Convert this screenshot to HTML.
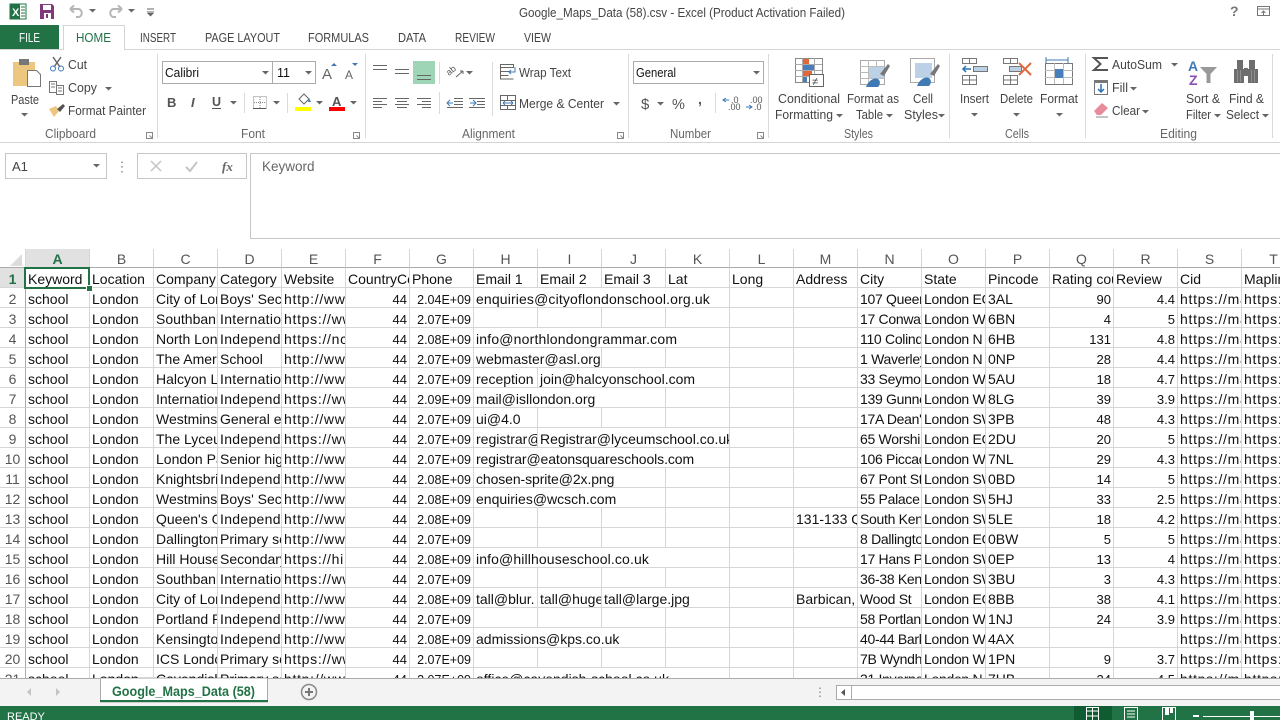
<!DOCTYPE html>
<html><head><meta charset="utf-8"><title>Excel</title>
<style>
html,body{margin:0;padding:0;width:1280px;height:720px;overflow:hidden;background:#fff;font-family:"Liberation Sans",sans-serif}
#top{position:absolute;left:0;top:0}
#g{position:absolute;left:0;top:249px;width:1280px;height:429px;overflow:hidden}
table{border-collapse:separate;border-spacing:0;table-layout:fixed;width:1306px;font:14px/16px "Liberation Sans",sans-serif;color:#111}
td,th{height:16px;padding:3px 0 0 2px;border-right:1px solid #d6d6d6;border-bottom:1px solid #d6d6d6;overflow:hidden;white-space:nowrap;text-align:left;font-weight:normal;box-sizing:content-box;vertical-align:top}
tr.h th{text-align:center;color:#555;padding:2px 0 0;background:#fff;border-bottom:1px solid #ababab;border-right:1px solid #d6d6d6;height:16px}
tr.h th.s{background:#e1e1e1;color:#217346;font-weight:bold;border-bottom:1px solid #217346}
tr.h th.z{padding:0;height:18px}
td.n{text-align:center;padding:3px 0 0;color:#555;background:#fff;border-right:1px solid #ababab}
td.n.s{background:#e1e1e1;color:#217346;font-weight:bold}
td.r{text-align:right;padding:4px 2px 0 0;font-size:13px;line-height:15px;height:15px}
td.p{text-align:right;padding:5px 2px 0 0;font-size:12.5px;line-height:14px;height:14px}
td.u{letter-spacing:.7px}
td.d{letter-spacing:.3px}
td.k{letter-spacing:-.3px}
#sel{position:absolute;left:24px;top:18px;width:62px;height:18px;border:2px solid #217346}
#hnd{position:absolute;left:86px;top:36px;width:5px;height:5px;background:#217346;border:1px solid #fff}
</style></head><body>
<svg id="top" width="1280" height="720" viewBox="0 0 1280 720" font-family="Liberation Sans, sans-serif" font-size="12.5" fill="#444">
<defs><path id="c" d="M0 0h7l-3.5 3.5z" fill="#666"/><path id="l" d="M0 0h6v6h-6zM3 3l3 3M6 3v3h-3" fill="none" stroke="#888"/></defs>
<!-- title bar -->
<rect x="10" y="4" width="16" height="15" fill="#fff" stroke="#217346"/><rect x="10" y="4" width="10" height="15" fill="#217346"/>
<text x="12" y="16" font-size="11" font-weight="bold" fill="#fff">X</text>
<path d="M21 7h4M21 10h4M21 13h4M21 16h4" stroke="#217346"/>
<path d="M40 4h12l2 2v13h-14z" fill="#80397b"/><rect x="43" y="5" width="8" height="5" fill="#fff"/><rect x="44" y="13" width="7" height="6" fill="#fff"/><rect x="46" y="14" width="2" height="4" fill="#80397b"/>
<path d="M70 9h8c5 0 5 8 0 8h-2M70 9l4-3.500M70 9l4 3.500" fill="none" stroke="#b5b5b5" stroke-width="2"/><use href="#c" x="89" y="9"/>
<path d="M122 9h-8c-5 0-5 8 0 8h2M122 9l-4-3.500M122 9l-4 3.500" fill="none" stroke="#b5b5b5" stroke-width="2"/><use href="#c" x="128" y="9"/>
<path d="M147 9h7M147 12h7" stroke="#666"/><use href="#c" x="147" y="13"/>
<text x="519" y="17" textLength="326" lengthAdjust="spacingAndGlyphs" fill="#444">Google_Maps_Data (58).csv - Excel (Product Activation Failed)</text>
<text x="1230" y="16" font-size="14" font-weight="bold" fill="#777">?</text>
<rect x="1257.500" y="6.500" width="12" height="9" fill="none" stroke="#777"/><path d="M1258 9h12M1263.500 15v-4M1261.500 13l2-2 2 2" stroke="#777" fill="none"/>
<!-- tabs -->
<rect x="0" y="25" width="59" height="25" fill="#217346"/>
<text x="19" y="42" fill="#fff" font-size="12.500" textLength="21" lengthAdjust="spacingAndGlyphs">FILE</text>
<path d="M0 49.500H63.500V25.500H124.500V49.500H1280" fill="none" stroke="#d4d4d4"/>
<text x="76" y="42" fill="#217346" textLength="35" lengthAdjust="spacingAndGlyphs">HOME</text>
<text x="140" y="42" textLength="36" lengthAdjust="spacingAndGlyphs">INSERT</text>
<text x="205" y="42" textLength="75" lengthAdjust="spacingAndGlyphs">PAGE LAYOUT</text>
<text x="308" y="42" textLength="61" lengthAdjust="spacingAndGlyphs">FORMULAS</text>
<text x="398" y="42" textLength="28" lengthAdjust="spacingAndGlyphs">DATA</text>
<text x="455" y="42" textLength="40" lengthAdjust="spacingAndGlyphs">REVIEW</text>
<text x="524" y="42" textLength="27" lengthAdjust="spacingAndGlyphs">VIEW</text>
<path d="M0 142.500H1280" stroke="#d4d4d4"/>
<path d="M157.500 54v84M365.500 54v84M628.500 54v84M768.500 54v84M949.500 54v84M1085.500 54v84M1272.500 54v84M439.500 62v22M439.500 92v22M492.500 62v54M715.500 93v20M244.500 93v20M287.500 93v20" stroke="#dadada"/>
<!-- clipboard -->
<rect x="13" y="62" width="22" height="24" fill="#edc67f"/><rect x="19" y="59" width="10" height="6" fill="#777"/>
<path d="M27.500 70.500h9l4 4v12h-13z" fill="#fff" stroke="#777"/>
<text x="11" y="104" textLength="28" lengthAdjust="spacingAndGlyphs">Paste</text><use href="#c" x="21" y="113"/>
<path d="M53 57l7 10M61 57l-7 10" stroke="#666" stroke-width="1.500"/><circle cx="53" cy="68.500" r="2.500" fill="none" stroke="#3f7ab5"/><circle cx="61" cy="68.500" r="2.500" fill="none" stroke="#3f7ab5"/>
<text x="68" y="69" textLength="19" lengthAdjust="spacingAndGlyphs">Cut</text>
<path d="M49.500 81.500h7v11h-7zM56.500 85.500h7v9h-7zM51 84h4M51 87h4M58 88h4M58 91h4" fill="#fff" stroke="#777"/>
<text x="68" y="92" textLength="29" lengthAdjust="spacingAndGlyphs">Copy</text><use href="#c" x="105" y="87"/>
<path d="M49 109l7-3 3 5-5 6z" fill="#edc67f"/><path d="M57 109l6-5 2 2-5 6z" fill="#555"/>
<text x="68" y="115" textLength="78" lengthAdjust="spacingAndGlyphs">Format Painter</text>
<text x="45" y="138" textLength="51" lengthAdjust="spacingAndGlyphs" fill="#666">Clipboard</text>
<use href="#l" x="146.500" y="132.500"/>
<!-- font -->
<rect x="162.500" y="61.500" width="110" height="22" fill="#fff" stroke="#ababab"/><rect x="272.500" y="61.500" width="43" height="22" fill="#fff" stroke="#ababab"/>
<text x="165" y="77" fill="#111" textLength="34" lengthAdjust="spacingAndGlyphs">Calibri</text><text x="277" y="77" fill="#111">11</text>
<use href="#c" x="262" y="71"/><use href="#c" x="305" y="71"/>
<text x="322" y="79" font-size="15" fill="#666">A</text><path d="M331 66l3-3 3 3z" fill="#3f7ab5"/>
<text x="345" y="79" font-size="12" fill="#666">A</text><path d="M352 63l3 3 3-3z" fill="#3f7ab5"/>
<text x="167" y="107" font-weight="bold" fill="#555" font-size="13">B</text>
<text x="191" y="107" font-style="italic" font-weight="bold" fill="#555" font-size="13">I</text>
<text x="212" y="106" font-weight="bold" fill="#555" font-size="12.500">U</text><path d="M212 108.500h9" stroke="#555"/><use href="#c" x="230" y="101"/>
<path d="M253.500 96.500h13v12h-13zM260 97v11M254 102.500h12" fill="none" stroke="#888" stroke-dasharray="1 1"/><path d="M253 108.500h13" stroke="#555"/><use href="#c" x="273" y="101"/>
<path d="M299 99l5-5 5 5-5 5z" fill="#fff" stroke="#666"/><path d="M309 98l2 4h-3z" fill="#3f7ab5"/><rect x="295" y="107" width="16" height="4" fill="#ffff00"/><use href="#c" x="316" y="101"/>
<text x="332" y="106" font-size="13" font-weight="bold" fill="#555">A</text><rect x="329" y="107" width="16" height="4" fill="#f00"/><use href="#c" x="350" y="101"/>
<text x="241" y="138" textLength="24" lengthAdjust="spacingAndGlyphs" fill="#666">Font</text>
<use href="#l" x="353.500" y="132.500"/>
<!-- alignment -->
<rect x="413" y="61" width="22" height="23" fill="#9fd5b7"/>
<path d="M373 65.500h14M373 69.500h14M395 69.500h14M395 73.500h14M417 75.500h14M417 79.500h14" stroke="#666" fill="none"/>
<text x="0" y="0" font-size="9" fill="#555" transform="translate(449 76) rotate(-40)">ab</text>
<path d="M456 77l7-6M463 71h-3M463 71v3" fill="none" stroke="#666"/><use href="#c" x="466" y="71"/>
<path d="M500.500 64.500h13v3h-13zM500.500 71.500h10M500.500 75.500h8M500.500 64v15h13" fill="none" stroke="#666"/><path d="M515 67v5h-6M511 70l-2 2 2 2" fill="none" stroke="#3f7ab5"/>
<text x="519" y="77" textLength="52" lengthAdjust="spacingAndGlyphs">Wrap Text</text>
<path d="M373 98.500h14M373 101.500h9M373 104.500h14M373 107.500h9M395 98.500h14M397 101.500h10M395 104.500h14M397 107.500h10M417 98.500h14M422 101.500h9M417 104.500h14M422 107.500h9" stroke="#666"/>
<path d="M454 98.500h9M454 101.500h9M454 104.500h9M447 107.500h16M469 98.500h16M477 101.500h8M477 104.500h8M469 107.500h16" stroke="#666"/><path d="M453 103h-6M450 100l-3 3 3 3" fill="none" stroke="#3f7ab5"/><path d="M470 103h6M473 100l3 3-3 3" fill="none" stroke="#3f7ab5"/>
<rect x="500.500" y="95.500" width="15" height="14" fill="none" stroke="#666"/><path d="M500 100.500h16M500 105.500h16M507.500 95v5M507.500 106v4" stroke="#666"/><path d="M503 103h10M503 103l2-2M503 103l2 2M513 103l-2-2M513 103l-2 2" stroke="#3f7ab5" fill="none"/>
<text x="519" y="108" textLength="85" lengthAdjust="spacingAndGlyphs">Merge &amp; Center</text><use href="#c" x="613" y="102"/>
<text x="462" y="138" textLength="53" lengthAdjust="spacingAndGlyphs" fill="#666">Alignment</text>
<use href="#l" x="617.500" y="132.500"/>
<!-- number -->
<rect x="633.500" y="61.500" width="130" height="22" fill="#fff" stroke="#ababab"/>
<text x="636" y="77" fill="#111" textLength="40" lengthAdjust="spacingAndGlyphs">General</text><use href="#c" x="753" y="71"/>
<text x="641" y="109" font-size="15" fill="#555">$</text><use href="#c" x="657" y="102"/>
<text x="672" y="109" font-size="14.500" fill="#555">%</text><text x="698" y="104" font-size="14" font-weight="bold" fill="#555">,</text>
<text x="731" y="103" font-size="9" fill="#555">.0</text><text x="728" y="110" font-size="9" fill="#555">.00</text><path d="M729 100h-6M726 98l-3 2 3 2" stroke="#3f7ab5" fill="none"/>
<text x="750" y="103" font-size="9" fill="#555">.00</text><text x="754" y="110" font-size="9" fill="#555">.0</text><path d="M746 107h6M749 105l3 2-3 2" stroke="#3f7ab5" fill="none"/>
<text x="670" y="138" textLength="41" lengthAdjust="spacingAndGlyphs" fill="#666">Number</text>
<use href="#l" x="757.500" y="132.500"/>
<!-- styles -->
<rect x="795.500" y="58.500" width="27" height="24" fill="#fff" stroke="#888"/><path d="M795 64.500h27M795 70.500h27M795 76.500h27M802.500 58v24M814.500 58v24" stroke="#aaa"/>
<rect x="803" y="59" width="6" height="5" fill="#e2683c"/><rect x="803" y="65" width="11" height="5" fill="#4a7ebb"/><rect x="803" y="71" width="9" height="5" fill="#e2683c"/><rect x="803" y="77" width="4" height="5" fill="#4a7ebb"/>
<rect x="809.500" y="74.500" width="14" height="12" fill="#fff" stroke="#666"/><text x="812" y="85" font-size="11" fill="#444">≠</text>
<text x="778" y="103" textLength="62" lengthAdjust="spacingAndGlyphs">Conditional</text>
<text x="775" y="119" textLength="58" lengthAdjust="spacingAndGlyphs">Formatting</text><use href="#c" x="836" y="114"/>
<rect x="860.500" y="60.500" width="24" height="24" fill="#fff" stroke="#aaa"/><path d="M860 66.500h25M860 72.500h25M860 78.500h25M868.500 60v25M876.500 60v25" stroke="#bbb"/><rect x="869" y="67" width="15" height="11" fill="#bcd0e6"/>
<path d="M880 74l8-10 2 2-6 10z" fill="#777"/><path d="M866 87c2-6 8-10 12-8 3 2 2 6 0 8z" fill="#3f7ab5"/>
<text x="847" y="103" textLength="52" lengthAdjust="spacingAndGlyphs">Format as</text>
<text x="856" y="119" textLength="27" lengthAdjust="spacingAndGlyphs">Table</text><use href="#c" x="886" y="114"/>
<rect x="910.500" y="58.500" width="24" height="24" fill="#fff" stroke="#aaa"/><rect x="915" y="63" width="17" height="15" fill="#bcd0e6"/>
<path d="M930 74l8-10 2 2-6 10z" fill="#777"/><path d="M917 86c2-6 8-10 12-8 3 2 2 6 0 8z" fill="#3f7ab5"/>
<text x="913" y="103" textLength="20" lengthAdjust="spacingAndGlyphs">Cell</text>
<text x="904" y="119" textLength="34" lengthAdjust="spacingAndGlyphs">Styles</text><use href="#c" x="938" y="114"/>
<text x="844" y="138" textLength="29" lengthAdjust="spacingAndGlyphs" fill="#666">Styles</text>
<!-- cells -->
<path d="M962.500 58.500h14v5h-14zM969.500 58v5M973.500 66.500h14v5h-14zM980.500 66v5M962.500 75.500h14v9h-14zM962.500 80h14M969.500 75v9" fill="none" stroke="#777"/><rect x="974" y="67" width="13" height="4" fill="#bcd0e6"/><path d="M971 69h-8M966 66l-3 3 3 3" fill="none" stroke="#2a6fb5" stroke-width="1.500"/>
<text x="960" y="103" textLength="29" lengthAdjust="spacingAndGlyphs">Insert</text><use href="#c" x="971" y="113"/>
<path d="M1003.500 58.500h14v5h-14zM1010.500 58v5M1003.500 75.500h14v9h-14zM1003.500 80h14M1010.500 75v9M1009.500 66.500h12v5h-12z" fill="none" stroke="#777"/><rect x="1010" y="67" width="11" height="4" fill="#bcd0e6"/><path d="M1019 63l12 12M1031 63l-12 12" stroke="#e2683c" stroke-width="2"/>
<text x="1000" y="103" textLength="33" lengthAdjust="spacingAndGlyphs">Delete</text><use href="#c" x="1013" y="113"/>
<path d="M1046 60h22M1046 57v6M1068 57v6" stroke="#3f7ab5" fill="none"/>
<rect x="1045.500" y="63.500" width="27" height="21" fill="#fff" stroke="#777"/><path d="M1045 70.500h28M1045 77.500h28M1054.500 63v21M1063.500 63v21" stroke="#bbb"/><rect x="1055" y="69" width="8" height="9" fill="#4a7ebb"/>
<text x="1040" y="103" textLength="38" lengthAdjust="spacingAndGlyphs">Format</text><use href="#c" x="1056" y="113"/>
<text x="1005" y="138" textLength="24" lengthAdjust="spacingAndGlyphs" fill="#666">Cells</text>
<!-- editing -->
<path d="M1108 58h-14l6.500 6-6.500 6h14" fill="none" stroke="#555" stroke-width="2"/>
<text x="1112" y="69" textLength="50" lengthAdjust="spacingAndGlyphs">AutoSum</text><use href="#c" x="1171" y="63"/>
<rect x="1094.500" y="80.500" width="13" height="14" fill="#fff" stroke="#777"/><rect x="1094" y="80" width="14" height="3" fill="#777"/><path d="M1101 84v8M1098 89l3 3 3-3" fill="none" stroke="#2a6fb5" stroke-width="1.500"/>
<text x="1112" y="92" textLength="16" lengthAdjust="spacingAndGlyphs">Fill</text><use href="#c" x="1130" y="87"/>
<path d="M1094 111l8-8 6 5-7 7h-4z" fill="#e88b9b"/><path d="M1096 117h12" stroke="#888"/>
<text x="1112" y="115" textLength="28" lengthAdjust="spacingAndGlyphs">Clear</text><use href="#c" x="1142" y="110"/>
<text x="1188" y="71" font-size="14" font-weight="bold" fill="#3f7ab5">A</text><text x="1189" y="85" font-size="14" font-weight="bold" fill="#8a4fb5">Z</text>
<path d="M1200 67h17l-6.500 7v9h-4v-9z" fill="#999"/>
<text x="1186" y="103" textLength="34" lengthAdjust="spacingAndGlyphs">Sort &amp;</text>
<text x="1186" y="119" textLength="25" lengthAdjust="spacingAndGlyphs">Filter</text><use href="#c" x="1214" y="114"/>
<rect x="1237" y="60" width="6" height="9" fill="#6e6e6e"/><rect x="1249" y="60" width="6" height="9" fill="#6e6e6e"/>
<rect x="1234" y="69" width="10" height="14" fill="#6e6e6e"/><rect x="1248" y="69" width="10" height="14" fill="#6e6e6e"/><rect x="1244" y="68" width="4" height="8" fill="#6e6e6e"/>
<path d="M1237.500 70v12M1240.500 70v12M1251.500 70v12M1254.500 70v12" stroke="#909090"/>
<text x="1229" y="103" textLength="35" lengthAdjust="spacingAndGlyphs">Find &amp;</text>
<text x="1226" y="119" textLength="33" lengthAdjust="spacingAndGlyphs">Select</text><use href="#c" x="1262" y="114"/>
<text x="1160" y="138" textLength="37" lengthAdjust="spacingAndGlyphs" fill="#666">Editing</text>
<!-- formula bar -->
<rect x="5.500" y="153.500" width="101" height="25" fill="#fff" stroke="#c6c6c6"/>
<text x="12" y="171" font-size="13" fill="#444">A1</text><use href="#c" x="93" y="164"/>
<path d="M122 161.500v1.500M122 166v1.500M122 171v1.500" stroke="#aaa" stroke-width="2"/>
<rect x="137.500" y="153.500" width="109" height="25" fill="#fff" stroke="#c6c6c6"/>
<path d="M151 161l10 10M161 161l-10 10" stroke="#c4c4c4" stroke-width="1.500"/>
<path d="M186 167l4 4 7-9" stroke="#c4c4c4" stroke-width="2" fill="none"/>
<text x="222" y="171" font-family="Liberation Serif, serif" font-style="italic" font-weight="bold" font-size="13" fill="#666">fx</text>
<path d="M1280 153.500H250.500V238.500H1280" fill="#fff" stroke="#c6c6c6"/>
<text x="262" y="171" font-size="13.500" fill="#666">Keyword</text>
<!-- tab bar -->
<rect x="0" y="678" width="1280" height="28" fill="#f3f3f3"/>
<path d="M0 678.500H1280" stroke="#ababab"/>
<path d="M31 688v8l-4-4zM56 688v8l4-4z" fill="#c4c4c4"/>
<rect x="100.500" y="678" width="167" height="24" fill="#fff" stroke="#ababab"/>
<rect x="100" y="700" width="168" height="2" fill="#217346"/>
<text x="112" y="696" font-size="13.500" font-weight="bold" fill="#217346" textLength="143" lengthAdjust="spacingAndGlyphs">Google_Maps_Data (58)</text>
<circle cx="309" cy="692" r="7.500" fill="none" stroke="#888" stroke-width="1.500"/><path d="M309 688v8M305 692h8" stroke="#777" stroke-width="2"/>
<path d="M820 687.500v1.500M820 691.500v1.500M820 695.500v1.500" stroke="#aaa" stroke-width="2"/>
<rect x="836.500" y="685.500" width="450" height="14" fill="#fff" stroke="#ababab"/>
<path d="M851.500 685v15" stroke="#ababab"/><path d="M845 689v7l-4-3.500z" fill="#555"/>
<!-- status -->
<rect x="0" y="706" width="1280" height="14" fill="#217346"/>
<text x="7" y="720" font-size="11" fill="#fff">READY</text>
<rect x="1074" y="706" width="38" height="14" fill="#0f5c33"/>
<path d="M1086.500 711h12M1086.500 716h12M1086.500 708v12M1092.500 708v12M1098.500 708v12M1086 707.500h13" stroke="#fff" fill="none"/>
<path d="M1124.500 720v-12.500h13V720M1127 711h8M1127 714h8M1127 717h8" stroke="#fff" fill="none"/>
<path d="M1162.500 720v-12.500h13V720" stroke="#fff" fill="none"/><rect x="1165" y="708" width="4" height="7" fill="#fff"/><rect x="1170" y="708" width="3" height="5" fill="#fff"/>
<rect x="1193" y="715" width="6" height="2" fill="#fff"/><rect x="1203" y="716" width="77" height="1" fill="#fff"/><rect x="1250" y="711" width="4" height="9" fill="#fff"/>
</svg>
<div id="g"><table>
<colgroup><col style="width:26px"><col span="20" style="width:64px"></colgroup>
<tr class="h"><th class="z"><svg width="25" height="18" style="display:block"><path d="M10 17L22 5V17z" fill="#dcdcdc"/></svg></th><th class="s">A</th><th>B</th><th>C</th><th>D</th><th>E</th><th>F</th><th>G</th><th>H</th><th>I</th><th>J</th><th>K</th><th>L</th><th>M</th><th>N</th><th>O</th><th>P</th><th>Q</th><th>R</th><th>S</th><th>T</th></tr>
<tr><td class="n s">1</td><td>Keyword</td><td>Location</td><td>Company</td><td>Category</td><td>Website</td><td>CountryCode</td><td>Phone</td><td>Email 1</td><td>Email 2</td><td>Email 3</td><td>Lat</td><td>Long</td><td>Address</td><td>City</td><td>State</td><td>Pincode</td><td>Rating count</td><td>Review</td><td>Cid</td><td>Maplink</td></tr>
<tr><td class="n">2</td><td>school</td><td>London</td><td>City of London</td><td>Boys' Secondary</td><td class="u">http://www</td><td class="r">44</td><td class="p">2.04E+09</td><td colspan="4" style="letter-spacing:.14px">enquiries@cityoflondonschool.org.uk</td><td></td><td></td><td class="k">107 Queen</td><td class="k">London EC</td><td>3AL</td><td class="r">90</td><td class="r">4.4</td><td class="u">https://maps</td><td class="u">https://maps</td></tr>
<tr><td class="n">3</td><td>school</td><td>London</td><td>Southbank</td><td class="d">International</td><td class="u">https://www</td><td class="r">44</td><td class="p">2.07E+09</td><td></td><td></td><td></td><td></td><td></td><td></td><td class="k">17 Conway</td><td class="k">London W</td><td>6BN</td><td class="r">4</td><td class="r">5</td><td class="u">https://maps</td><td class="u">https://maps</td></tr>
<tr><td class="n">4</td><td>school</td><td>London</td><td>North London</td><td class="d">Independent</td><td class="u">https://nc</td><td class="r">44</td><td class="p">2.08E+09</td><td colspan="4" style="letter-spacing:.18px">info@northlondongrammar.com</td><td></td><td></td><td class="k">110 Colindale</td><td class="k">London N</td><td>6HB</td><td class="r">131</td><td class="r">4.8</td><td class="u">https://maps</td><td class="u">https://maps</td></tr>
<tr><td class="n">5</td><td>school</td><td>London</td><td>The American</td><td>School</td><td class="u">http://www</td><td class="r">44</td><td class="p">2.07E+09</td><td colspan="2">webmaster@asl.org</td><td></td><td></td><td></td><td></td><td class="k">1 Waverley</td><td class="k">London N</td><td>0NP</td><td class="r">28</td><td class="r">4.4</td><td class="u">https://maps</td><td class="u">https://maps</td></tr>
<tr><td class="n">6</td><td>school</td><td>London</td><td>Halcyon London</td><td class="d">International</td><td class="u">http://www</td><td class="r">44</td><td class="p">2.07E+09</td><td>reception</td><td colspan="3">join@halcyonschool.com</td><td></td><td></td><td class="k">33 Seymour</td><td class="k">London W</td><td>5AU</td><td class="r">18</td><td class="r">4.7</td><td class="u">https://maps</td><td class="u">https://maps</td></tr>
<tr><td class="n">7</td><td>school</td><td>London</td><td>International</td><td class="d">Independent</td><td class="u">https://www</td><td class="r">44</td><td class="p">2.09E+09</td><td colspan="3">mail@isllondon.org</td><td></td><td></td><td></td><td class="k">139 Gunnersbury</td><td class="k">London W</td><td>8LG</td><td class="r">39</td><td class="r">3.9</td><td class="u">https://maps</td><td class="u">https://maps</td></tr>
<tr><td class="n">8</td><td>school</td><td>London</td><td>Westminster</td><td>General education</td><td class="u">http://www</td><td class="r">44</td><td class="p">2.07E+09</td><td>ui@4.0</td><td></td><td></td><td></td><td></td><td></td><td class="k">17A Dean's</td><td class="k">London SW</td><td>3PB</td><td class="r">48</td><td class="r">4.3</td><td class="u">https://maps</td><td class="u">https://maps</td></tr>
<tr><td class="n">9</td><td>school</td><td>London</td><td>The Lyceum</td><td class="d">Independent</td><td class="u">https://www</td><td class="r">44</td><td class="p">2.07E+09</td><td>registrar@lyceum</td><td colspan="3">Registrar@lyceumschool.co.uk</td><td></td><td></td><td class="k">65 Worship</td><td class="k">London EC</td><td>2DU</td><td class="r">20</td><td class="r">5</td><td class="u">https://maps</td><td class="u">https://maps</td></tr>
<tr><td class="n">10</td><td>school</td><td>London</td><td>London Park</td><td>Senior high</td><td class="u">http://www</td><td class="r">44</td><td class="p">2.07E+09</td><td colspan="4" style="letter-spacing:-.1px">registrar@eatonsquareschools.com</td><td></td><td></td><td class="k">106 Piccadilly</td><td class="k">London W</td><td>7NL</td><td class="r">29</td><td class="r">4.3</td><td class="u">https://maps</td><td class="u">https://maps</td></tr>
<tr><td class="n">11</td><td>school</td><td>London</td><td>Knightsbridge</td><td class="d">Independent</td><td class="u">http://www</td><td class="r">44</td><td class="p">2.08E+09</td><td colspan="3" style="letter-spacing:-.1px">chosen-sprite@2x.png</td><td></td><td></td><td></td><td class="k">67 Pont St</td><td class="k">London SW</td><td>0BD</td><td class="r">14</td><td class="r">5</td><td class="u">https://maps</td><td class="u">https://maps</td></tr>
<tr><td class="n">12</td><td>school</td><td>London</td><td>Westminster</td><td>Boys' Secondary</td><td class="u">http://www</td><td class="r">44</td><td class="p">2.08E+09</td><td colspan="3">enquiries@wcsch.com</td><td></td><td></td><td></td><td class="k">55 Palace</td><td class="k">London SW</td><td>5HJ</td><td class="r">33</td><td class="r">2.5</td><td class="u">https://maps</td><td class="u">https://maps</td></tr>
<tr><td class="n">13</td><td>school</td><td>London</td><td>Queen's Gate</td><td class="d">Independent</td><td class="u">http://www</td><td class="r">44</td><td class="p">2.08E+09</td><td></td><td></td><td></td><td></td><td></td><td>131-133 Queen's</td><td class="k">South Kensington</td><td class="k">London SW</td><td>5LE</td><td class="r">18</td><td class="r">4.2</td><td class="u">https://maps</td><td class="u">https://maps</td></tr>
<tr><td class="n">14</td><td>school</td><td>London</td><td>Dallington</td><td>Primary school</td><td class="u">http://www</td><td class="r">44</td><td class="p">2.07E+09</td><td></td><td></td><td></td><td></td><td></td><td></td><td class="k">8 Dallington</td><td class="k">London EC</td><td>0BW</td><td class="r">5</td><td class="r">5</td><td class="u">https://maps</td><td class="u">https://maps</td></tr>
<tr><td class="n">15</td><td>school</td><td>London</td><td>Hill House</td><td>Secondary</td><td class="u">https://hi</td><td class="r">44</td><td class="p">2.08E+09</td><td colspan="4" style="letter-spacing:.12px">info@hillhouseschool.co.uk</td><td></td><td></td><td class="k">17 Hans Pl</td><td class="k">London SW</td><td>0EP</td><td class="r">13</td><td class="r">4</td><td class="u">https://maps</td><td class="u">https://maps</td></tr>
<tr><td class="n">16</td><td>school</td><td>London</td><td>Southbank</td><td class="d">International</td><td class="u">https://www</td><td class="r">44</td><td class="p">2.07E+09</td><td></td><td></td><td></td><td></td><td></td><td></td><td class="k">36-38 Kensington</td><td class="k">London SW</td><td>3BU</td><td class="r">3</td><td class="r">4.3</td><td class="u">https://maps</td><td class="u">https://maps</td></tr>
<tr><td class="n">17</td><td>school</td><td>London</td><td>City of London</td><td class="d">Independent</td><td class="u">http://www</td><td class="r">44</td><td class="p">2.08E+09</td><td>tall@blur.</td><td>tall@huge.jpg</td><td colspan="2">tall@large.jpg</td><td></td><td>Barbican, EC2</td><td class="k">Wood St</td><td class="k">London EC</td><td>8BB</td><td class="r">38</td><td class="r">4.1</td><td class="u">https://maps</td><td class="u">https://maps</td></tr>
<tr><td class="n">18</td><td>school</td><td>London</td><td>Portland Place</td><td class="d">Independent</td><td class="u">http://www</td><td class="r">44</td><td class="p">2.07E+09</td><td></td><td></td><td></td><td></td><td></td><td></td><td class="k">58 Portland</td><td class="k">London W</td><td>1NJ</td><td class="r">24</td><td class="r">3.9</td><td class="u">https://maps</td><td class="u">https://maps</td></tr>
<tr><td class="n">19</td><td>school</td><td>London</td><td>Kensington</td><td class="d">Independent</td><td class="u">http://www</td><td class="r">44</td><td class="p">2.08E+09</td><td colspan="3">admissions@kps.co.uk</td><td></td><td></td><td></td><td class="k">40-44 Barkston</td><td class="k">London W</td><td>4AX</td><td></td><td></td><td class="u">https://maps</td><td class="u">https://maps</td></tr>
<tr><td class="n">20</td><td>school</td><td>London</td><td>ICS London</td><td>Primary school</td><td class="u">https://www</td><td class="r">44</td><td class="p">2.07E+09</td><td></td><td></td><td></td><td></td><td></td><td></td><td class="k">7B Wyndham</td><td class="k">London W</td><td>1PN</td><td class="r">9</td><td class="r">3.7</td><td class="u">https://maps</td><td class="u">https://maps</td></tr>
<tr><td class="n">21</td><td>school</td><td>London</td><td>Cavendish</td><td>Primary school</td><td class="u">http://www</td><td class="r">44</td><td class="p">2.07E+09</td><td colspan="4">office@cavendish-school.co.uk</td><td></td><td></td><td class="k">31 Inverness</td><td class="k">London N</td><td>7HB</td><td class="r">24</td><td class="r">4.5</td><td class="u">https://maps</td><td class="u">https://maps</td></tr>
</table>
<div id="sel"></div><div id="hnd"></div></div>
</body></html>
